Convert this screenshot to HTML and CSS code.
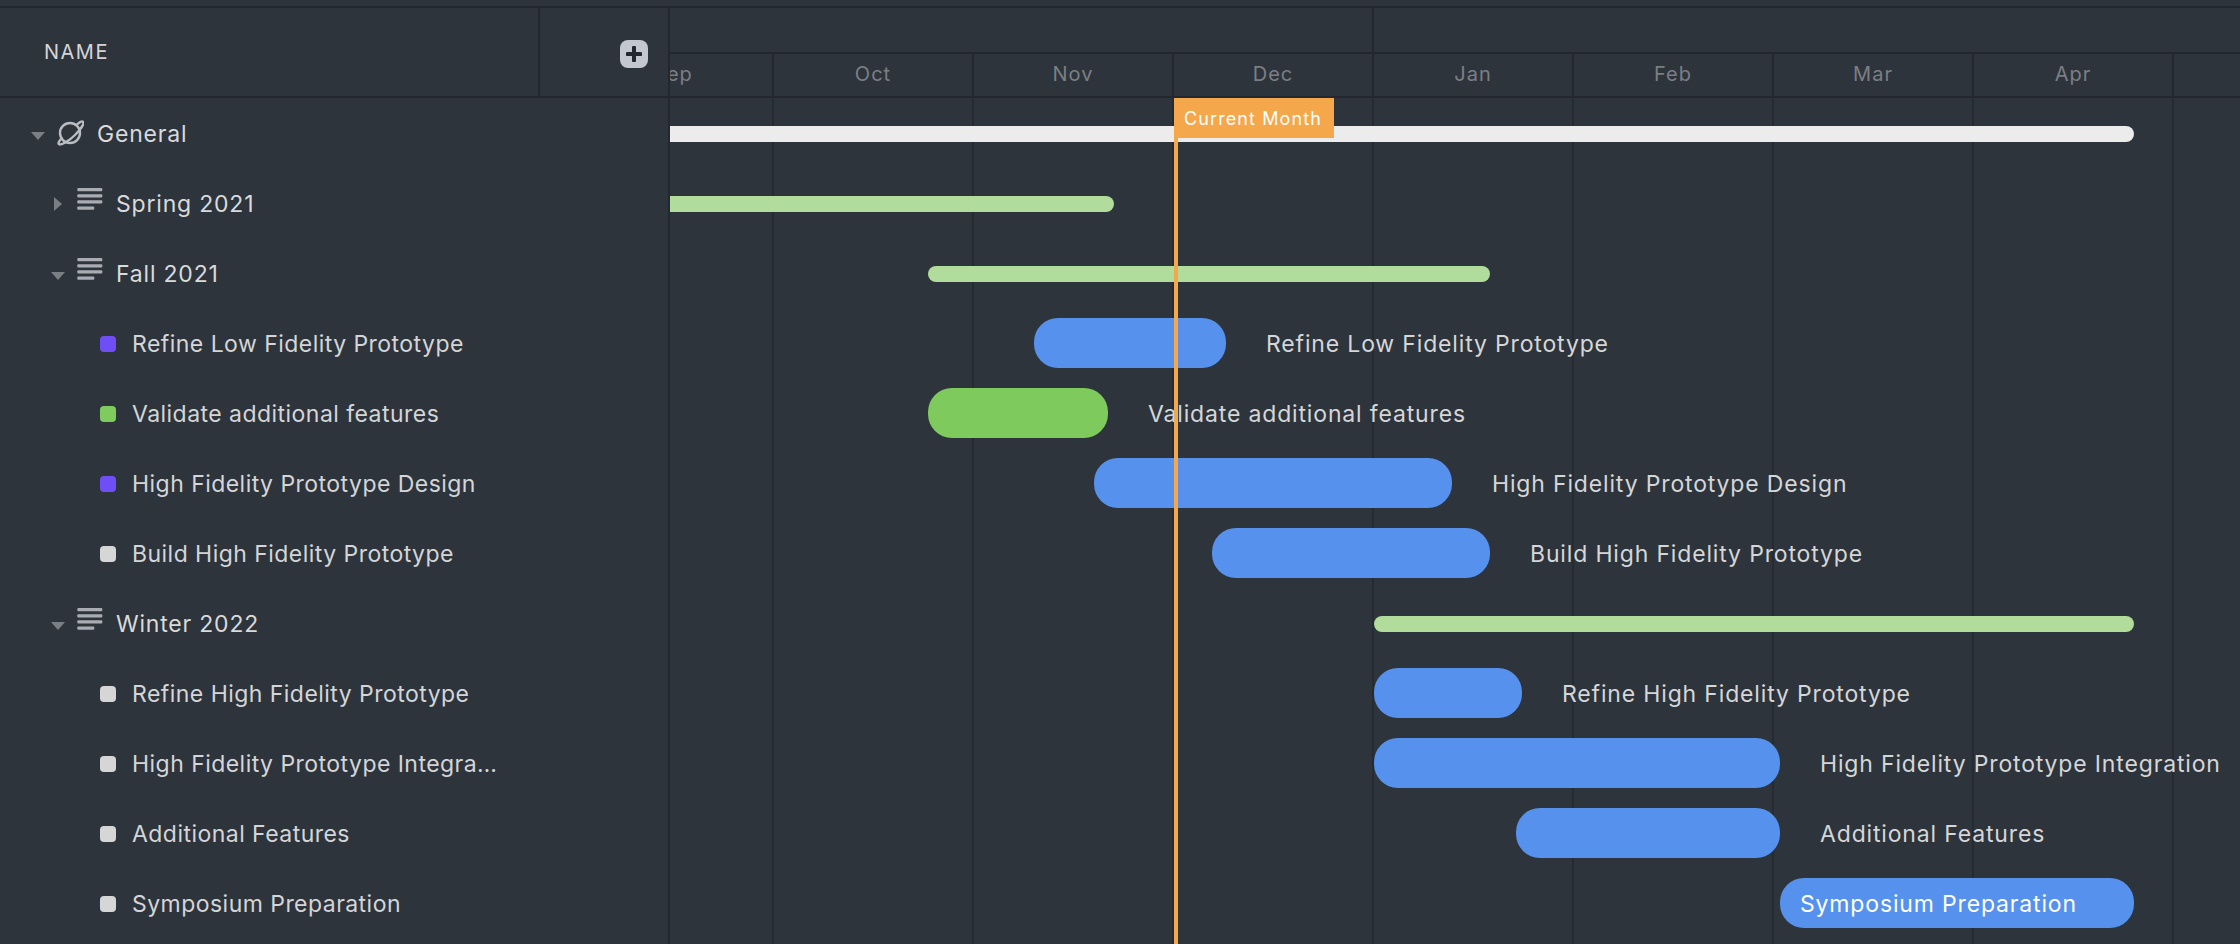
FILE: index.html
```html
<!DOCTYPE html>
<html lang="en">
<head>
  <meta charset="UTF-8">
  <title>Gantt chart</title>
  <link rel="stylesheet" href="styles.css">
</head>
<body>

<div class="gantt">

  <div class="side">
    <div class="side-head">
      <div class="col-name">NAME</div>
      <div class="col-add">
        <button class="add-btn" aria-label="Add">
          <svg width="16" height="16" viewBox="0 0 16 16"><path d="M8 1.5v13M1.5 8h13" stroke="#232830" stroke-width="4" stroke-linecap="round"/></svg>
        </button>
      </div>
    </div>

    <div class="tree">
      <div class="row lvl-0">
        <span class="caret down"></span>
        <svg class="ic-planet" width="28" height="28" viewBox="0 0 28 28" fill="none" stroke="#b9bcc2" stroke-width="2.4" stroke-linecap="round">
          <circle cx="14" cy="14" r="10"/>
          <path d="M21 5.500C23.500 3 26 1.800 27 2.800 28.500 4.300 25 10 19 16 13 22 5.500 26.500 3 25.200 1.800 24.400 3 22 5.500 19.500"/>
        </svg>
        <span class="txt">General</span>
      </div>
      <div class="row lvl-1">
        <span class="caret right"></span>
        <svg class="ic-lines" width="26" height="22" viewBox="0 0 26 22" fill="#a9acb3"><rect x="0.300" width="25" height="3.200" rx="1"/><rect x="0.300" y="6.200" width="25" height="3.200" rx="1"/><rect x="0.300" y="12.300" width="25" height="3.200" rx="1"/><rect x="0.300" y="18.500" width="17" height="3.200" rx="1"/></svg>
        <span class="txt">Spring 2021</span>
      </div>
      <div class="row lvl-1">
        <span class="caret down"></span>
        <svg class="ic-lines" width="26" height="22" viewBox="0 0 26 22" fill="#a9acb3"><rect x="0.300" width="25" height="3.200" rx="1"/><rect x="0.300" y="6.200" width="25" height="3.200" rx="1"/><rect x="0.300" y="12.300" width="25" height="3.200" rx="1"/><rect x="0.300" y="18.500" width="17" height="3.200" rx="1"/></svg>
        <span class="txt">Fall 2021</span>
      </div>
      <div class="row lvl-2"><span class="dot dot-purple"></span><span class="txt">Refine Low Fidelity Prototype</span></div>
      <div class="row lvl-2"><span class="dot dot-green"></span><span class="txt">Validate additional features</span></div>
      <div class="row lvl-2"><span class="dot dot-purple"></span><span class="txt">High Fidelity Prototype Design</span></div>
      <div class="row lvl-2"><span class="dot dot-grey"></span><span class="txt">Build High Fidelity Prototype</span></div>
      <div class="row lvl-1">
        <span class="caret down"></span>
        <svg class="ic-lines" width="26" height="22" viewBox="0 0 26 22" fill="#a9acb3"><rect x="0.300" width="25" height="3.200" rx="1"/><rect x="0.300" y="6.200" width="25" height="3.200" rx="1"/><rect x="0.300" y="12.300" width="25" height="3.200" rx="1"/><rect x="0.300" y="18.500" width="17" height="3.200" rx="1"/></svg>
        <span class="txt">Winter 2022</span>
      </div>
      <div class="row lvl-2"><span class="dot dot-grey"></span><span class="txt">Refine High Fidelity Prototype</span></div>
      <div class="row lvl-2"><span class="dot dot-grey"></span><span class="txt cut">High Fidelity Prototype Integration</span></div>
      <div class="row lvl-2"><span class="dot dot-grey"></span><span class="txt">Additional Features</span></div>
      <div class="row lvl-2"><span class="dot dot-grey"></span><span class="txt">Symposium Preparation</span></div>
    </div>
  </div>

  <div class="chart">
    <div class="years">
      <div class="year first"></div>
      <div class="year"></div>
    </div>
    <div class="months">
      <div class="month">Sep</div>
      <div class="month">Oct</div>
      <div class="month">Nov</div>
      <div class="month">Dec</div>
      <div class="month">Jan</div>
      <div class="month">Feb</div>
      <div class="month">Mar</div>
      <div class="month">Apr</div>
      <div class="month"></div>
    </div>

    <div class="bars">
      <div class="row"><div class="bar thin open white" style="width:1464px"></div></div>
      <div class="row"><div class="bar thin open lime" style="width:444px"></div></div>
      <div class="row"><div class="bar thin lime" style="margin-left:258px;width:562px"></div></div>
      <div class="row up"><div class="bar blue" style="margin-left:364px;width:192px"></div><span class="label">Refine Low Fidelity Prototype</span></div>
      <div class="row up"><div class="bar green" style="margin-left:258px;width:180px"></div><span class="label">Validate additional features</span></div>
      <div class="row up"><div class="bar blue" style="margin-left:424px;width:358px"></div><span class="label">High Fidelity Prototype Design</span></div>
      <div class="row up"><div class="bar blue" style="margin-left:542px;width:278px"></div><span class="label">Build High Fidelity Prototype</span></div>
      <div class="row"><div class="bar thin lime" style="margin-left:704px;width:760px"></div></div>
      <div class="row up"><div class="bar blue" style="margin-left:704px;width:148px"></div><span class="label">Refine High Fidelity Prototype</span></div>
      <div class="row up"><div class="bar blue" style="margin-left:704px;width:406px"></div><span class="label">High Fidelity Prototype Integration</span></div>
      <div class="row up"><div class="bar blue" style="margin-left:846px;width:264px"></div><span class="label">Additional Features</span></div>
      <div class="row up"><div class="bar blue inside" style="margin-left:1110px;width:354px">Symposium Preparation</div></div>
    </div>

    <div class="current">
      <div class="current-flag">Current Month</div>
    </div>
  </div>

</div>

</body>
</html>
```

FILE: styles.css
```css
* {
  box-sizing: border-box;
}

html, body {
  margin: 0;
  height: 100%;
}

body {
  font-family: Inter, "Liberation Sans", sans-serif;
  background: #2e343b;
  color: #d3d5d8;
  overflow: hidden;
}

.gantt {
  display: flex;
  height: 944px;
  margin-top: 6px;
  border-top: 2px solid #232830;
}

/* left panel */
.side {
  width: 670px;
  flex-shrink: 0;
  border-right: 2px solid #232830;
}

.side-head {
  display: flex;
  height: 90px;
  border-bottom: 2px solid #232830;
}

.col-name {
  width: 540px;
  padding: 33px 0 0 44px;
  border-right: 2px solid #232830;
  font-size: 20px;
  letter-spacing: 1.5px;
  line-height: 22px;
  color: #d3d5d8;
}

.col-add {
  flex: 1;
  padding: 32px 0 0 80px;
}

.add-btn {
  display: flex;
  align-items: center;
  justify-content: center;
  width: 28px;
  height: 28px;
  padding: 0;
  border: none;
  border-radius: 8px;
  background: #c3c7cf;
}

.tree {
  padding-top: 1px;
}

.row {
  display: flex;
  align-items: center;
  height: 70px;
}

.lvl-0 {
  padding-left: 31px;
}

.lvl-1 {
  padding-left: 51px;
}

.lvl-2 {
  padding-left: 100px;
}

.txt {
  font-size: 23px;
  letter-spacing: 0.46px;
  white-space: nowrap;
}

.lvl-0 .txt,
.lvl-1 .txt {
  letter-spacing: 0.8px;
  color: #d8dadc;
}

.cut {
  max-width: 372px;
  overflow: hidden;
  text-overflow: ellipsis;
}

.caret {
  flex-shrink: 0;
  width: 14px;
  height: 8px;
  margin-top: 4px;
  background: #7a7e85;
  clip-path: polygon(0 0, 100% 0, 50% 100%);
}

.caret.right {
  width: 8px;
  height: 14px;
  margin: 0 3px;
  clip-path: polygon(0 0, 100% 50%, 0 100%);
}

.ic-planet {
  margin: -2px 13px 0 11px;
  flex-shrink: 0;
}

.ic-lines {
  margin: -10px 13px 0 12px;
  flex-shrink: 0;
}

.dot {
  flex-shrink: 0;
  width: 16px;
  height: 16px;
  margin-right: 16px;
  border-radius: 4px;
}

.dot-purple {
  background: #6e4ff6;
}

.dot-green {
  background: #80cb5e;
}

.dot-grey {
  background: #d6d6d6;
}

/* chart */
.chart {
  position: relative;
  flex: 1;
  overflow: hidden;
}

.years {
  display: flex;
  height: 46px;
  border-bottom: 2px solid #232830;
}

.year.first {
  width: 704px;
  flex-shrink: 0;
  border-right: 2px solid #232830;
}

.months {
  display: flex;
  height: 44px;
  margin-left: -96px;
  border-bottom: 2px solid #232830;
}

.month {
  flex: 0 0 200px;
  border-right: 2px solid #232830;
  padding-top: 6px;
  text-align: center;
  font-size: 20px;
  letter-spacing: 1px;
  line-height: 28px;
  color: #7b7f85;
}

.bars {
  padding-top: 1px;
  min-height: 860px;
  background-image: linear-gradient(to right, #262b32 2px, transparent 2px);
  background-size: 200px 100%;
  background-position: 102px 0;
}

.bar {
  flex-shrink: 0;
  border-radius: 24px;
}

.bar.thin {
  height: 16px;
  border-radius: 8px;
}

.bar.open {
  border-radius: 0 8px 8px 0;
}

.row.up {
  padding-bottom: 2px;
}

.white {
  background: #ececec;
}

.lime {
  background: #b1dc9b;
}

.blue {
  height: 50px;
  background: #5591ed;
}

.green {
  height: 50px;
  background: #7fca5c;
}

.label {
  margin: 2px 0 0 40px;
  font-size: 23px;
  letter-spacing: 0.84px;
  white-space: nowrap;
  color: #d5d6d8;
}

.inside {
  padding-left: 20px;
  font-size: 23px;
  letter-spacing: 0.84px;
  line-height: 52px;
  color: #fff;
}

/* current month marker */
.current {
  position: absolute;
  top: 90px;
  bottom: 0;
  left: 504px;
  width: 4px;
  background: #f4a74b;
}

.current-flag {
  width: 160px;
  height: 40px;
  padding-left: 10px;
  background: #f4a74b;
  color: #fff;
  font-size: 18px;
  letter-spacing: 1.1px;
  line-height: 42px;
  white-space: nowrap;
}
```
